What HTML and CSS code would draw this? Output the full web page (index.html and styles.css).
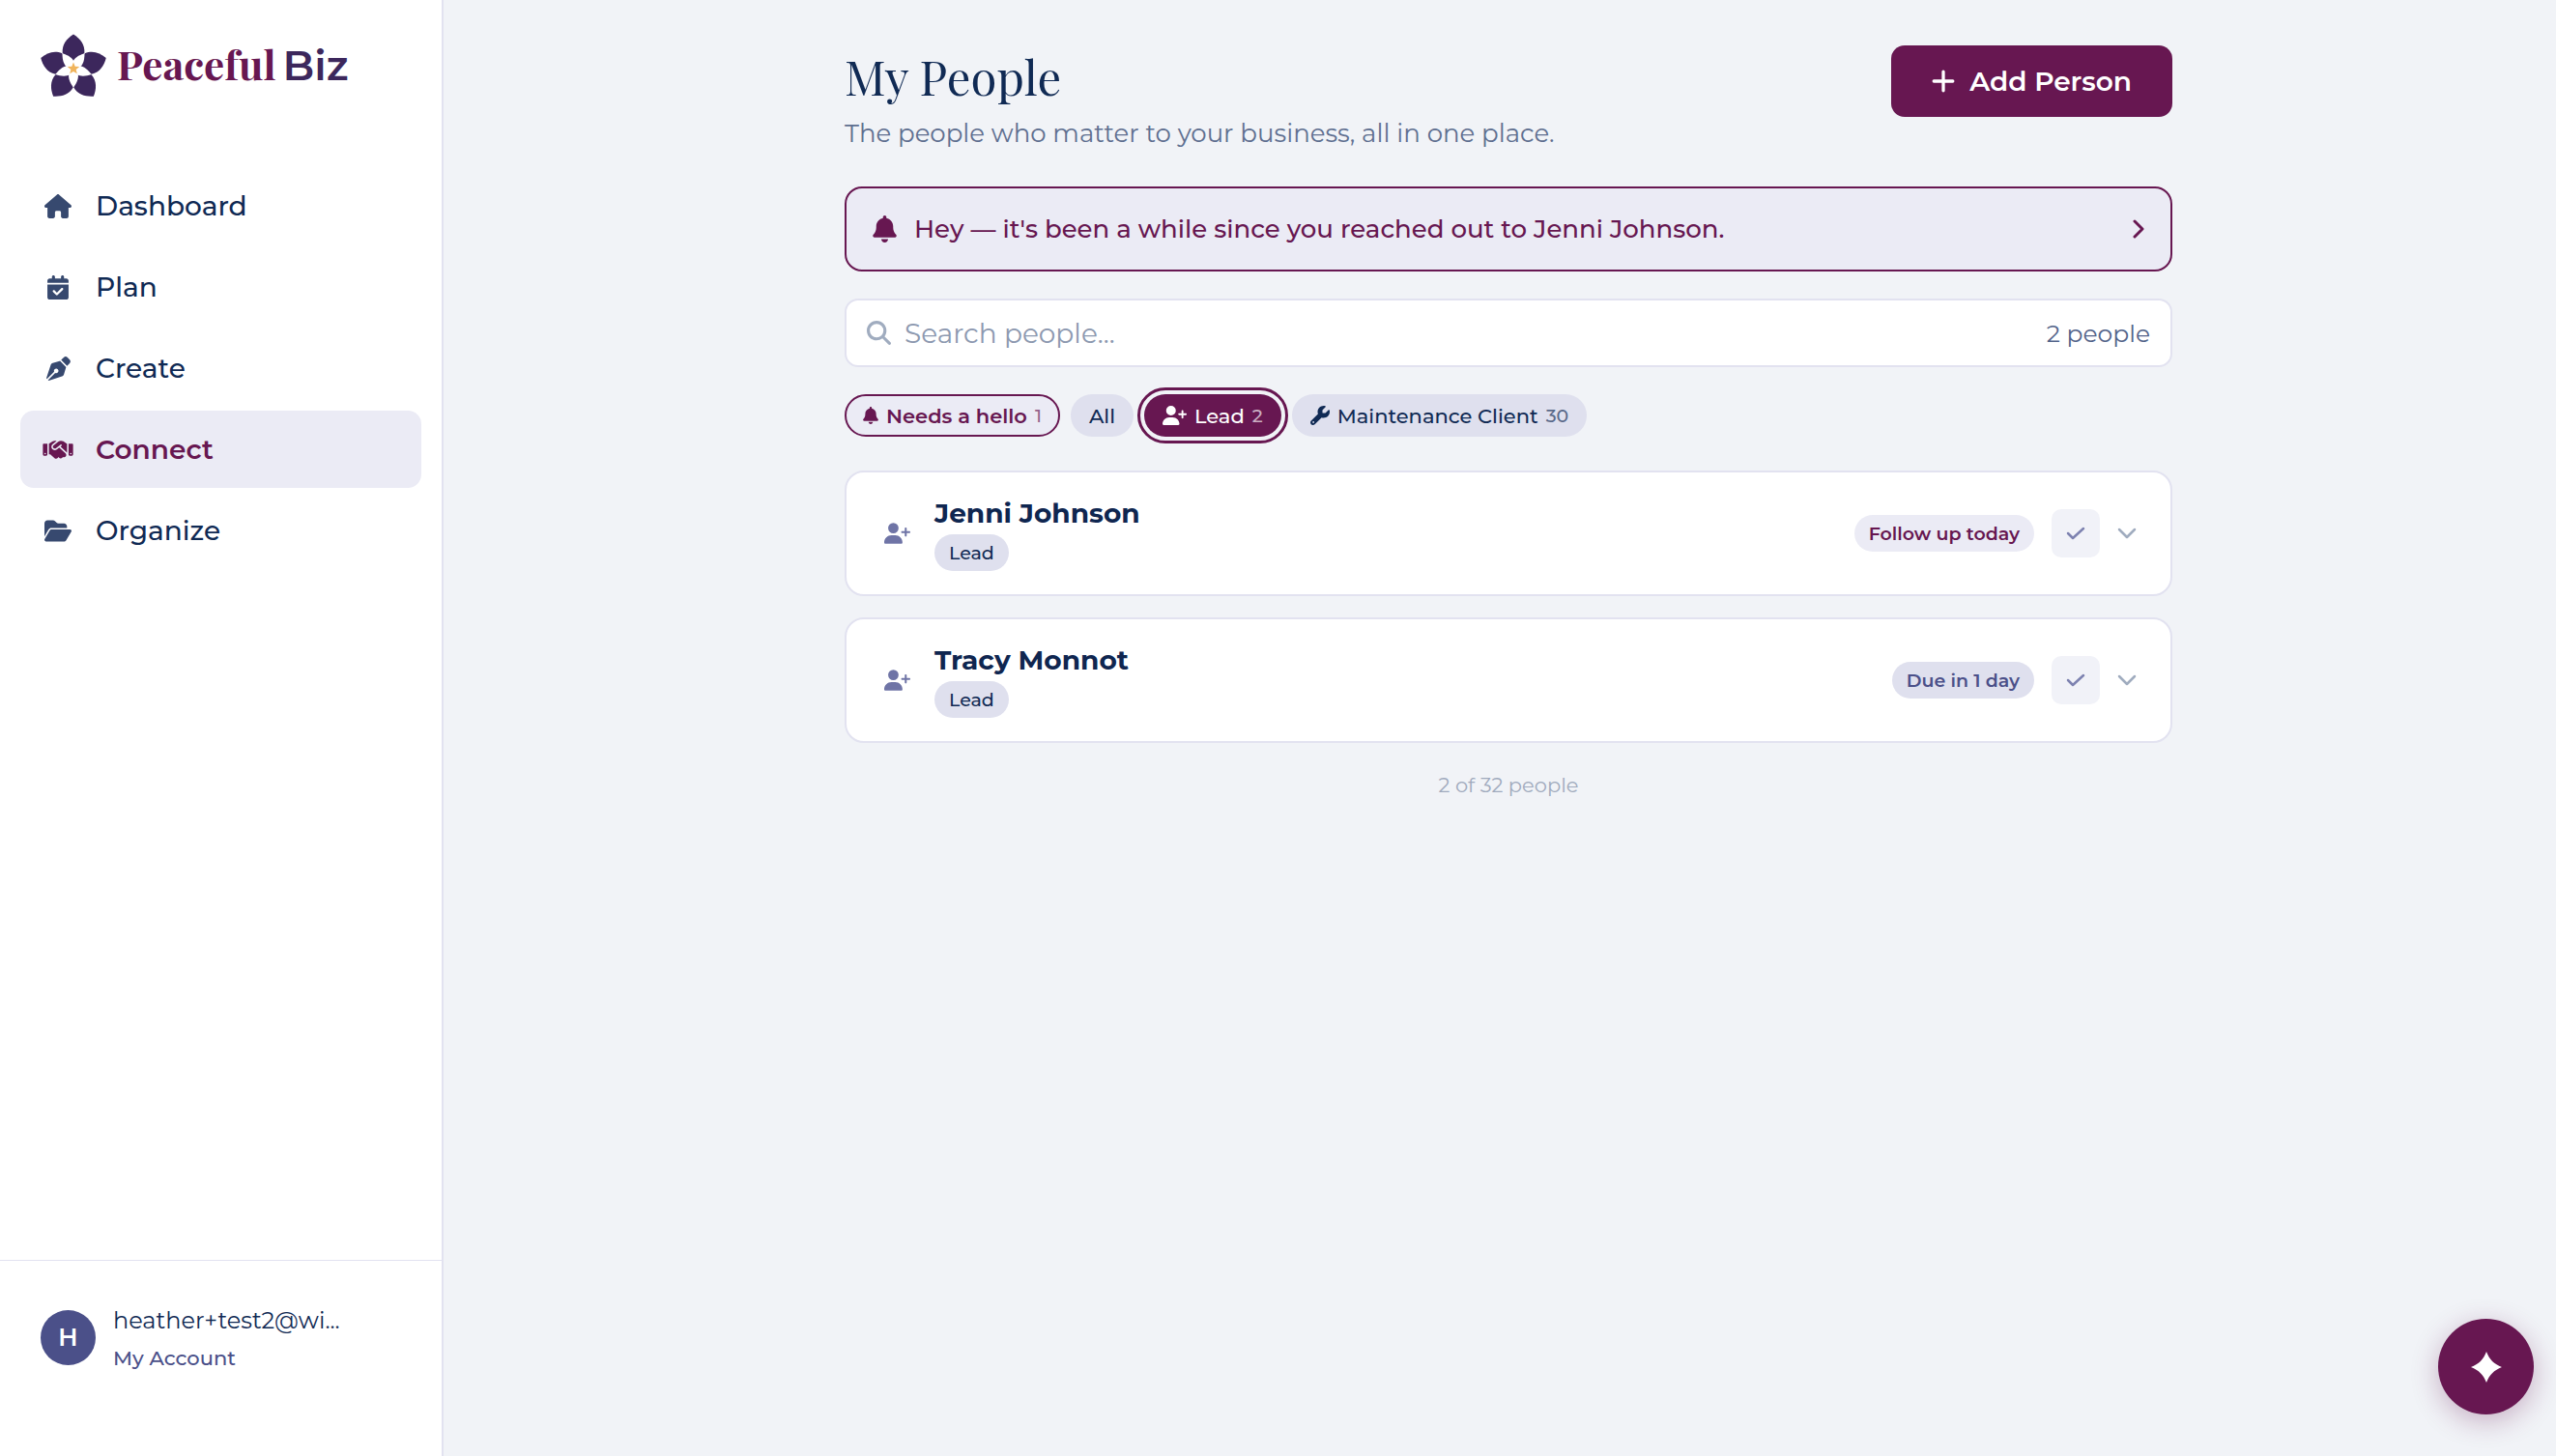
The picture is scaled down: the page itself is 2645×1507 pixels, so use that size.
FILE: index.html
```html
<!DOCTYPE html>
<html lang="en">
<head>
<meta charset="utf-8">
<meta name="viewport" content="width=device-width, initial-scale=1">
<title>My People - PeacefulBiz</title>
<link rel="stylesheet" href="styles.css">
</head>
<body>
<svg class="sprite" aria-hidden="true">
  <symbol id="house" viewBox="0 0 576 512"><path d="M575.8 255.5c0 18-15 32.1-32 32.1l-32 0 .7 160.2c0 2.7-.2 5.4-.5 8.1l0 16.2c0 22.1-17.9 40-40 40l-16 0c-1.1 0-2.2 0-3.3-.1c-1.4 .1-2.8 .1-4.2 .1L416 512l-24 0c-22.1 0-40-17.9-40-40l0-24 0-64c0-17.7-14.3-32-32-32l-64 0c-17.7 0-32 14.3-32 32l0 64 0 24c0 22.1-17.9 40-40 40l-24 0-31.9 0c-1.5 0-3-.1-4.5-.2c-1.2 .1-2.4 .2-3.6 .2l-16 0c-22.1 0-40-17.9-40-40l0-112c0-.9 0-1.9 .1-2.8l0-69.7-32 0c-18 0-32-14-32-32.1c0-9 3-17 10-24L266.4 8c7-7 15-8 22-8s15 2 21 7L564.8 231.5c8 7 12 15 11 24z"/></symbol>
  <symbol id="calendar" viewBox="0 0 448 512"><path d="M128 0c17.7 0 32 14.3 32 32l0 32 128 0 0-32c0-17.7 14.3-32 32-32s32 14.3 32 32l0 32 48 0c26.5 0 48 21.5 48 48l0 48L0 160l0-48C0 85.5 21.5 64 48 64l48 0 0-32c0-17.7 14.3-32 32-32zM0 192l448 0 0 272c0 26.5-21.5 48-48 48L48 512c-26.5 0-48-21.5-48-48L0 192zM329 305c9.4-9.4 9.4-24.6 0-33.9s-24.6-9.4-33.9 0l-95 95-47-47c-9.4-9.4-24.6-9.4-33.9 0s-9.4 24.6 0 33.9l64 64c9.4 9.4 24.6 9.4 33.9 0L329 305z"/></symbol>
  <symbol id="pen" viewBox="0 0 512 512"><path d="M368.4 18.3L312.7 74.1 437.9 199.3l55.7-55.7c21.9-21.9 21.9-57.3 0-79.2L447.6 18.3c-21.9-21.9-57.3-21.9-79.2 0zM288 94.6l-9.2 2.8L134.7 140.6c-19.9 6-35.7 21.2-42.3 41L3.8 445.8c-3.8 11.3-1 23.9 7.3 32.4L164.7 324.7c-3-6.3-4.7-13.3-4.7-20.7c0-26.5 21.5-48 48-48s48 21.5 48 48s-21.5 48-48 48c-7.4 0-14.4-1.7-20.7-4.7L33.7 500.9c8.6 8.3 21.1 11.2 32.4 7.3l264.3-88.6c19.7-6.6 35-22.4 41-42.3l43.2-144.1 2.7-9.2L288 94.6z"/></symbol>
  <symbol id="handshake" viewBox="0 0 640 512"><path d="M323.4 85.2l-96.8 78.4c-16.1 13-19.2 36.4-7 53.1c12.9 17.8 38 21.3 55.3 7.8l99.3-77.2c7-5.4 17-4.2 22.5 2.8s4.2 17-2.8 22.5l-20.9 16.2L512 316.8 512 128l-.7 0-3.9-2.5L434.8 79c-15.3-9.8-33.2-15-51.4-15c-21.8 0-43 7.5-60 21.2zm22.8 124.4l-51.7 40.2C263 274.3 217.3 268 193.7 235.6c-22.2-30.5-16.6-73.1 12.7-96.8l83.2-67.3c-11.6-4.9-24.1-7.4-36.8-7.4C234 64 215.7 69.6 200 80l-72 48 0 224 28.2 0 91.4 83.4c19.6 17.9 49.9 16.5 67.8-3.1c5.5-6.1 9.2-13.2 11.1-20.6l17 15.6c19.5 17.9 49.9 16.6 67.8-2.9c4.5-4.9 7.8-10.6 9.9-16.5c19.4 13 45.8 10.3 62.1-7.5c17.9-19.5 16.6-49.9-2.9-67.8l-134.2-123zM16 128c-8.8 0-16 7.2-16 16L0 352c0 17.7 14.3 32 32 32l32 0c17.7 0 32-14.3 32-32l0-224-80 0zM48 320a16 16 0 1 1 0 32 16 16 0 1 1 0-32zM544 128l0 224c0 17.7 14.3 32 32 32l32 0c17.7 0 32-14.3 32-32l0-208c0-8.8-7.2-16-16-16l-80 0zm32 208a16 16 0 1 1 32 0 16 16 0 1 1 -32 0z"/></symbol>
  <symbol id="folder" viewBox="0 0 576 512"><path d="M88.7 223.8L0 375.8 0 96C0 60.7 28.7 32 64 32l117.5 0c17 0 33.3 6.7 45.3 18.7l26.5 26.5c12 12 28.3 18.7 45.3 18.7L416 96c35.3 0 64 28.7 64 64l0 32-336 0c-22.8 0-43.8 12.1-55.3 31.8zm27.6 16.1C122.1 230 132.6 224 144 224l400 0c11.5 0 22 6.1 27.7 16.1s5.7 22.2-.1 32.1l-112 192C453.9 474 443.4 480 432 480L32 480c-11.5 0-22-6.1-27.7-16.1s-5.7-22.2 .1-32.1l112-192z"/></symbol>
  <symbol id="bell" viewBox="0 0 448 512"><path d="M224 0c-17.7 0-32 14.3-32 32l0 19.2C119 66 64 130.6 64 208l0 18.8c0 47-17.3 92.4-48.5 127.6l-7.4 8.3c-8.4 9.4-10.4 22.9-5.3 34.4S19.4 416 32 416l384 0c12.6 0 24-7.4 29.2-18.9s3.1-25-5.3-34.4l-7.4-8.3C401.3 319.2 384 273.9 384 226.8l0-18.8c0-77.4-55-142-128-156.8L256 32c0-17.7-14.3-32-32-32zm45.3 493.3c12-12 18.7-28.3 18.7-45.3l-64 0-64 0c0 17 6.7 33.3 18.7 45.3s28.3 18.7 45.3 18.7s33.3-6.7 45.3-18.7z"/></symbol>
  <symbol id="user-plus" viewBox="0 0 640 512"><path d="M96 128a128 128 0 1 1 256 0A128 128 0 1 1 96 128zM0 482.3C0 383.8 79.8 304 178.3 304l91.4 0C368.2 304 448 383.8 448 482.3c0 16.4-13.3 29.7-29.7 29.7L29.7 512C13.3 512 0 498.7 0 482.3zM504 312l0-64-64 0c-13.3 0-24-10.7-24-24s10.7-24 24-24l64 0 0-64c0-13.3 10.7-24 24-24s24 10.7 24 24l0 64 64 0c13.3 0 24 10.7 24 24s-10.7 24-24 24l-64 0 0 64c0 13.3-10.7 24-24 24s-24-10.7-24-24z"/></symbol>
  <symbol id="wrench" viewBox="0 0 512 512"><path d="M352 320c88.4 0 160-71.6 160-160c0-15.3-2.2-30.1-6.2-44.2c-3.1-10.8-16.4-13.2-24.3-5.3l-76.8 76.8c-3 3-7.1 4.7-11.3 4.7L336 192c-8.8 0-16-7.2-16-16l0-57.4c0-4.2 1.7-8.3 4.7-11.3l76.8-76.8c7.9-7.9 5.4-21.2-5.3-24.3C382.1 2.2 367.3 0 352 0C263.6 0 192 71.6 192 160c0 19.1 3.4 37.5 9.5 54.5L19.9 396.1C7.2 408.8 0 426.1 0 444.1C0 481.6 30.4 512 67.9 512c18 0 35.3-7.2 48-19.9L297.5 310.5c17 6.2 35.4 9.5 54.5 9.5zM80 408a24 24 0 1 1 0 48 24 24 0 1 1 0-48z"/></symbol>
  <symbol id="search" viewBox="0 0 512 512"><path d="M416 208c0 45.9-14.9 88.3-40 122.7L502.6 457.4c12.5 12.5 12.5 32.8 0 45.3s-32.8 12.5-45.3 0L330.7 376c-34.4 25.2-76.8 40-122.7 40C93.1 416 0 322.9 0 208S93.1 0 208 0S416 93.1 416 208zM208 352a144 144 0 1 0 0-288 144 144 0 1 0 0 288z"/></symbol>
  <symbol id="plus" viewBox="0 0 22 22"><path class="line" d="M11 2v18M2 11h18"/></symbol>
  <symbol id="right" viewBox="0 0 12 20"><path class="line" d="M2 2l8 8-8 8"/></symbol>
  <symbol id="down" viewBox="0 0 20 12"><path class="line" stroke-width="2.500" d="M2 2l8 8 8-8"/></symbol>
  <symbol id="check" viewBox="0 0 20 14"><path class="line" stroke-width="2.500" d="M2 7l5 5L18 2"/></symbol>
</svg>

<div class="app">
  <aside class="sidebar">
    <a class="brand" href="#">
      <svg class="flower" viewBox="-34 -36 68 68" aria-hidden="true">
        <g fill="#3c275c">
          <path id="p" d="M0-35.500C7-31 12-25 11.300-16L0-2-11.300-16C-12-25-7-31 0-35.500z"/>
          <use href="#p" transform="rotate(72)"/><use href="#p" transform="rotate(144)"/><use href="#p" transform="rotate(216)"/><use href="#p" transform="rotate(288)"/>
        </g>
        <g fill="#fff">
          <path id="w" d="M0 0C8 4 5 13 0 19.500-5 13-8 4 0 0z"/>
          <use href="#w" transform="rotate(72)"/><use href="#w" transform="rotate(144)"/><use href="#w" transform="rotate(216)"/><use href="#w" transform="rotate(288)"/>
        </g>
        <path fill="#f0b45c" d="M0-6.500L1.700-2.300 6.200-2 2.700.9 3.800 5.300 0 2.900-3.800 5.300-2.700.9-6.200-2-1.700-2.300z"/>
      </svg>
      <span class="wordmark"><span class="peaceful">Peaceful</span><span class="biz">Biz</span></span>
    </a>
    <nav class="nav" aria-label="Main">
      <a href="#"><span class="slot"><svg class="i-28"><use href="#house"/></svg></span>Dashboard</a>
      <a href="#"><span class="slot"><svg class="i-22"><use href="#calendar"/></svg></span>Plan</a>
      <a href="#"><span class="slot"><svg class="i-25"><use href="#pen"/></svg></span>Create</a>
      <a href="#" class="active" aria-current="page"><span class="slot"><svg class="i-32"><use href="#handshake"/></svg></span>Connect</a>
      <a href="#"><span class="slot"><svg class="i-28"><use href="#folder"/></svg></span>Organize</a>
    </nav>
    <a class="account" href="#">
      <span class="avatar">H</span>
      <span class="who"><span class="email">heather+test2@wi...</span><span class="mine">My Account</span></span>
    </a>
  </aside>

  <main class="main">
    <div class="content">
      <header class="head">
        <div>
          <h1>My People</h1>
          <p class="sub">The people who matter to your business, all in one place.</p>
        </div>
        <button class="add" type="button"><svg><use href="#plus"/></svg>Add Person</button>
      </header>

      <button class="banner" type="button">
        <svg class="bell"><use href="#bell"/></svg>
        <span>Hey — it's been a while since you reached out to Jenni Johnson.</span>
        <svg class="go"><use href="#right"/></svg>
      </button>

      <div class="search">
        <label for="q" aria-label="Search people"><svg><use href="#search"/></svg></label>
        <input id="q" type="text" placeholder="Search people...">
        <span>2 people</span>
      </div>

      <div class="chips">
        <button class="chip hello" type="button"><svg class="c-bell"><use href="#bell"/></svg>Needs a hello <small>1</small></button>
        <button class="chip" type="button">All</button>
        <button class="chip on" type="button" aria-pressed="true"><svg class="c-user"><use href="#user-plus"/></svg>Lead <small>2</small></button>
        <button class="chip" type="button"><svg class="c-wrench"><use href="#wrench"/></svg>Maintenance Client <small>30</small></button>
      </div>

      <section class="list" aria-label="People">
        <article class="card">
          <svg class="kind"><use href="#user-plus"/></svg>
          <div class="person"><h2>Jenni Johnson</h2><span class="tag">Lead</span></div>
          <span class="status now">Follow up today</span>
          <button class="done" type="button" aria-label="Mark done"><svg><use href="#check"/></svg></button>
          <button class="more" type="button" aria-label="Show details"><svg><use href="#down"/></svg></button>
        </article>
        <article class="card">
          <svg class="kind"><use href="#user-plus"/></svg>
          <div class="person"><h2>Tracy Monnot</h2><span class="tag">Lead</span></div>
          <span class="status">Due in 1 day</span>
          <button class="done" type="button" aria-label="Mark done"><svg><use href="#check"/></svg></button>
          <button class="more" type="button" aria-label="Show details"><svg><use href="#down"/></svg></button>
        </article>
      </section>
      <p class="total">2 of 32 people</p>
    </div>
  </main>
</div>

<button class="fab" type="button" aria-label="Open assistant">
  <svg viewBox="-16 -16 32 32"><path d="M0-16C3-8 8-3 16 0 8 3 3 8 0 16-3 8-8 3-16 0-8-3-3-8 0-16z"/></svg>
</button>
</body>
</html>
```

FILE: styles.css
```css
:root {
  --navy: #102a54;
  --plum: #671751;
  --indigo: #4b5089;
  --page: #f1f3f7;
  --lilac: #ebebf5;
  --chip: #dfe0ee;
  --line: #e2e2f0;
}

* { box-sizing: border-box; }

body {
  margin: 0;
  background: var(--page);
  color: var(--navy);
  font-family: Montserrat, Inter, "Open Sans", sans-serif;
}

h1, h2, p { margin: 0; }
a { color: inherit; text-decoration: none; }
button, input { font: inherit; color: inherit; }
button { border: 0; padding: 0; background: none; cursor: pointer; }
svg { display: block; flex: none; fill: currentColor; stroke-width: 3; }
.sprite { position: absolute; width: 0; height: 0; }
.line {
  fill: none;
  stroke: currentColor;
  stroke-linecap: round;
  stroke-linejoin: round;
}

.app {
  display: grid;
  grid-template-columns: 459px 1fr;
  min-height: 100vh;
}

/* Sidebar */
.sidebar {
  display: flex;
  flex-direction: column;
  background: #fff;
  border-right: 2px solid var(--line);
}
.brand {
  display: flex;
  align-items: flex-start;
  gap: 11px;
  padding: 35px 43px 0 42px;
}
.flower { width: 68px; height: 68px; }
.wordmark {
  display: flex;
  align-items: baseline;
  gap: 7px;
  line-height: 62px;
}
.peaceful {
  color: var(--plum);
  font-family: "Playfair Display", "Liberation Serif", serif;
  font-size: 42px;
  font-weight: 700;
}
.biz { color: #3c275c; font-size: 43px; font-weight: 600; }

.nav {
  display: flex;
  flex-direction: column;
  gap: 4px;
  padding: 70px 21px 0;
}
.nav a {
  display: flex;
  align-items: center;
  gap: 23px;
  height: 80px;
  padding: 0 23px;
  border-radius: 14px;
  font-size: 28px;
  font-weight: 500;
}
.nav a.active { background: var(--lilac); color: var(--plum); font-weight: 600; }
.slot { display: flex; justify-content: center; width: 32px; color: #37496f; }
.active .slot { color: inherit; }
.slot svg { height: 25px; }
.i-22 { width: 22px; }
.i-25 { width: 25px; }
.i-28 { width: 28px; }
.i-32 { width: 32px; }

.account {
  display: flex;
  align-items: center;
  gap: 18px;
  margin-top: auto;
  padding: 43px 42px 87px;
  border-top: 1px solid var(--line);
}
.avatar {
  display: grid;
  place-items: center;
  width: 57px;
  height: 57px;
  border-radius: 50%;
  background: var(--indigo);
  color: #fff;
  font-size: 25px;
  font-weight: 600;
}
.who { display: flex; flex-direction: column; gap: 6px; }
.email { font-size: 24px; line-height: 38px; }
.mine { color: var(--indigo); font-size: 21px; font-weight: 500; line-height: 28px; }

/* Main column */
.main { padding: 47px 40px 40px 58px; }
.content { max-width: 1374px; margin: 0 auto; }

.head {
  display: flex;
  justify-content: space-between;
  align-items: flex-start;
}
h1 {
  margin-bottom: 6px;
  font-family: "Playfair Display", "Liberation Serif", serif;
  font-size: 49px;
  font-weight: 400;
  line-height: 64px;
}
.sub { color: #5f6f90; font-size: 26px; line-height: 42px; }
.add {
  display: flex;
  align-items: center;
  gap: 15px;
  height: 74px;
  padding: 0 42px;
  border-radius: 14px;
  background: var(--plum);
  color: #fff;
  font-size: 28px;
  font-weight: 600;
}
.add svg { width: 24px; height: 24px; }

.banner {
  display: flex;
  align-items: center;
  width: 100%;
  height: 88px;
  margin-top: 34px;
  padding: 0 27px;
  border: 2px solid var(--plum);
  border-radius: 18px;
  background: var(--lilac);
  color: var(--plum);
  font-size: 26px;
  font-weight: 500;
}
.bell { width: 25px; height: 28px; margin-right: 18px; }
.go { width: 12px; height: 20px; margin-left: auto; }

.search {
  display: flex;
  align-items: center;
  gap: 14px;
  height: 71px;
  margin-top: 28px;
  padding: 0 21px;
  border: 2px solid var(--line);
  border-radius: 14px;
  background: #fff;
}
.search svg { width: 25px; height: 25px; color: #a0acbf; }
.search input {
  flex: 1;
  min-width: 0;
  padding: 0;
  border: 0;
  outline: 0;
  background: none;
  font-size: 28px;
}
.search input::placeholder { color: #8d99b0; opacity: 1; }
.search span { color: #53648a; font-size: 25px; }

.chips { display: flex; flex-wrap: wrap; gap: 11px; margin-top: 28px; }
.chip {
  display: flex;
  align-items: center;
  gap: 8px;
  height: 44px;
  padding: 0 19px;
  border-radius: 22px;
  background: var(--chip);
  font-size: 21px;
  font-weight: 500;
}
.chip small { font-size: 19px; font-weight: 500; opacity: .65; }
.chip.hello {
  padding: 0 17px;
  border: 2px solid var(--plum);
  background: var(--lilac);
  color: var(--plum);
  font-weight: 600;
}
.chip.on {
  outline: 3px solid var(--plum);
  outline-offset: 4px;
  background: var(--plum);
  color: #fff;
}
.c-bell { width: 16px; height: 18px; }
.c-user { width: 25px; height: 20px; }
.c-wrench { width: 20px; height: 20px; }

.list { display: flex; flex-direction: column; gap: 22px; margin-top: 35px; }
.card {
  display: flex;
  align-items: center;
  height: 130px;
  padding: 0 35px 0 39px;
  border: 2px solid var(--line);
  border-radius: 20px;
  background: #fff;
}
.kind { width: 27px; height: 22px; margin-right: 25px; color: #6f74a6; }
.person {
  display: flex;
  flex-direction: column;
  align-items: flex-start;
  gap: 4px;
  margin-right: auto;
}
h2 { font-size: 28px; font-weight: 700; line-height: 36px; color: #0f2650; }
.tag, .status {
  display: flex;
  align-items: center;
  height: 38px;
  padding: 0 15px;
  border-radius: 19px;
  background: var(--chip);
  font-size: 19px;
}
.tag { font-weight: 500; }
.status { color: var(--indigo); font-weight: 600; }
.status.now { background: var(--lilac); color: var(--plum); }
.done {
  display: grid;
  place-items: center;
  width: 50px;
  height: 50px;
  margin: 0 18px;
  border-radius: 10px;
  background: #f1f2f8;
  color: #7d82b0;
}
.done svg { width: 20px; height: 14px; }
.more { color: #a0acbf; }
.more svg { width: 20px; height: 12px; }

.total {
  margin-top: 28px;
  color: #a0aabd;
  font-size: 21px;
  line-height: 32px;
  text-align: center;
}

.fab {
  position: fixed;
  right: 23px;
  bottom: 43px;
  display: grid;
  place-items: center;
  width: 99px;
  height: 99px;
  border-radius: 50%;
  background: var(--plum);
  color: #fff;
  box-shadow: 0 7px 28px rgba(103, 23, 81, .3);
}
.fab svg { width: 32px; height: 32px; }
```
